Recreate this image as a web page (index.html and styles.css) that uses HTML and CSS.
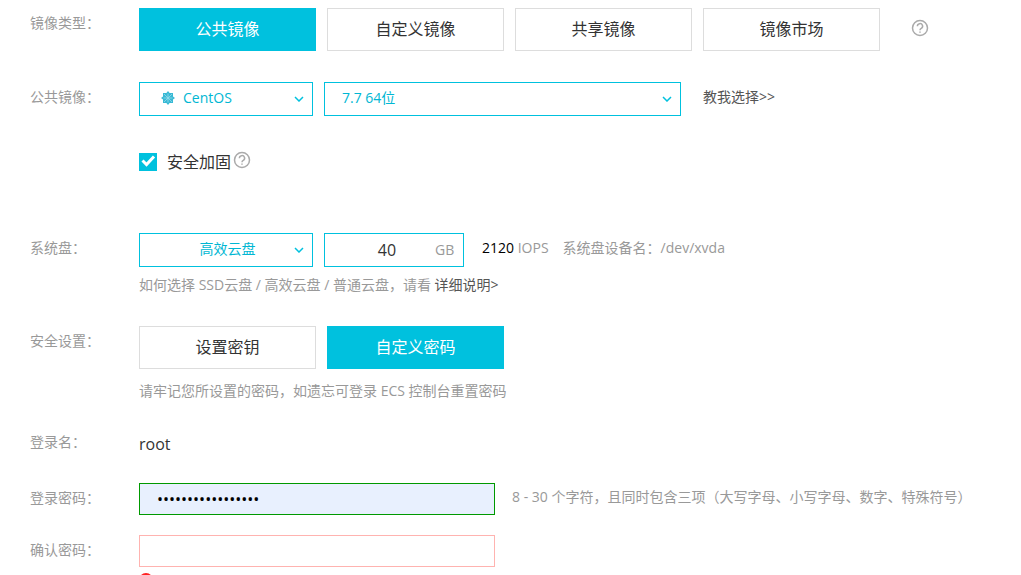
FILE: index.html
```html
<!DOCTYPE html>
<html lang="zh-CN">
<head>
  <meta charset="UTF-8" />
  <meta name="viewport" content="width=device-width, initial-scale=1.0"/>
  <title>云服务器配置</title>
  <link rel="stylesheet" href="styles.css">
</head>
<body>
  <form class="config">
    <div class="row row-type">
      <span class="label">镜像类型：</span>
      <div class="field">
        <div class="tabs">
          <button type="button" class="tab active">公共镜像</button>
          <button type="button" class="tab">自定义镜像</button>
          <button type="button" class="tab">共享镜像</button>
          <button type="button" class="tab">镜像市场</button>
        </div>
        <svg class="help help-far" viewBox="0 0 18 18"><circle cx="9" cy="9" r="7.5"/><path d="M6.4 7.2a2.6 2.5 0 1 1 3.9 2.1c-.9.5-1.3.9-1.3 1.9"/><path d="M9 12.5v1.3"/></svg>
      </div>
    </div>

    <div class="row row-image">
      <label class="label" for="imagen">公共镜像：</label>
      <div class="field">
        <div class="select-box narrow">
          <svg class="os-icon" viewBox="0 0 14 14"><path class="os-star" d="M7 0l1.6 2h3.4v3.4L14 7l-2 1.6v3.4H8.600L7 14l-1.600-2H2V8.600L0 7l2-1.600V2h3.400z"/><path class="os-lines" d="M7 2.500v9M2.500 7h9M3 3l8 8M11 3l-8 8"/><circle cx="7" cy="7" r="1.200" fill="#8edcec"/></svg>
          <select id="imagen" class="with-icon"><option>CentOS</option></select>
          <svg class="arrow" viewBox="0 0 10 6"><path d="M1 1l4 4 4-4"/></svg>
        </div>
        <div class="select-box wide">
          <select aria-label="版本"><option>7.7 64位</option></select>
          <svg class="arrow" viewBox="0 0 10 6"><path d="M1 1l4 4 4-4"/></svg>
        </div>
        <a class="link choose" href="#">教我选择&gt;&gt;</a>
      </div>
    </div>

    <div class="row row-check">
      <span class="label"></span>
      <div class="field">
        <input type="checkbox" id="refuerzo" class="check" checked />
        <label class="check-text" for="refuerzo">安全加固</label>
        <svg class="help" viewBox="0 0 18 18"><circle cx="9" cy="9" r="7.5"/><path d="M6.4 7.2a2.6 2.5 0 1 1 3.9 2.1c-.9.5-1.3.9-1.3 1.9"/><path d="M9 12.5v1.3"/></svg>
      </div>
    </div>

    <div class="row row-disk">
      <label class="label" for="disco">系统盘：</label>
      <div class="field">
        <div class="select-box narrow">
          <select id="disco" class="centered"><option>高效云盘</option></select>
          <svg class="arrow" viewBox="0 0 10 6"><path d="M1 1l4 4 4-4"/></svg>
        </div>
        <div class="size-box">
          <input type="text" id="tamano" value="40" aria-label="容量" />
          <label for="tamano">GB</label>
        </div>
        <span class="info"><span class="iops">2120</span> IOPS</span>
        <span class="info device">系统盘设备名：/dev/xvda</span>
      </div>
    </div>
    <p class="note note-disk">如何选择 SSD云盘 / 高效云盘 / 普通云盘，请看 <a class="link" href="#">详细说明&gt;</a></p>

    <div class="row row-security">
      <span class="label">安全设置：</span>
      <div class="field">
        <div class="tabs">
          <button type="button" class="tab">设置密钥</button>
          <button type="button" class="tab active">自定义密码</button>
        </div>
      </div>
    </div>
    <p class="note note-security">请牢记您所设置的密码，如遗忘可登录 ECS 控制台重置密码</p>

    <div class="row row-user">
      <span class="label">登录名：</span>
      <div class="field"><span class="user">root</span></div>
    </div>

    <div class="row row-pass">
      <label class="label" for="clave">登录密码：</label>
      <div class="field">
        <input type="password" id="clave" class="pass valid" value="Abcdefgh123456789" />
        <span class="info rule">8 - 30 个字符，且同时包含三项（大写字母、小写字母、数字、特殊符号）</span>
      </div>
    </div>

    <div class="row row-confirm">
      <label class="label" for="confirmar">确认密码：</label>
      <div class="field">
        <input type="password" id="confirmar" class="pass invalid" />
      </div>
    </div>
    <div class="error">
      <svg viewBox="0 0 14 14"><circle cx="7" cy="7" r="7" fill="#f22"/><path d="M7 3v5M7 10v1" stroke="#fff" stroke-width="2"/></svg>
    </div>
  </form>
</body>
</html>
```
FILE: styles.css
```css
* {
  box-sizing: border-box;
}

body {
  height: 100vh;
  margin: 0;
  overflow: hidden;
  background-color: #fff;
  color: #333;
  font-family: "Open Sans", "Noto Sans CJK SC", sans-serif;
  font-size: 14px;
  line-height: 20px;
}

button, input, select {
  font: inherit;
}

.config {
  padding: 8px 30px 0;
}

.row {
  display: grid;
  grid-template-columns: 109px 1fr;
}

.label {
  padding-top: 5px;
  color: #999;
  white-space: nowrap;
}

.field {
  display: flex;
  align-items: center;
  white-space: nowrap;
}

.tabs {
  display: flex;
  gap: 11px;
}

.tab {
  width: 177px;
  height: 43px;
  padding: 0 0 2px;
  border: 1px solid #ddd;
  background-color: #fff;
  color: #333;
  font-size: 16px;
  cursor: pointer;
}

.tab.active {
  border-color: #00c1de;
  background-color: #00c1de;
  color: #fff;
}

.help {
  width: 18px;
  height: 18px;
  margin: 0 0 4px 2px;
  fill: none;
  stroke: #aaa;
  stroke-width: 1.5;
}

.help-far {
  margin-left: 31px;
}

.row-image {
  margin-top: 31px;
}

.select-box {
  position: relative;
  margin-right: 11px;
}

.narrow {
  width: 174px;
}

.wide {
  width: 357px;
}

.select-box select {
  display: block;
  width: 100%;
  height: 34px;
  padding: 0 30px 2px 17px;
  border: 1px solid #00c1de;
  border-radius: 0;
  background-color: #fff;
  color: #00b7d3;
  appearance: none;
}

.select-box .with-icon {
  padding-left: 43px;
}

.select-box .centered {
  padding: 0 14px 2px 17px;
  text-align-last: center;
}

.arrow {
  position: absolute;
  top: 14px;
  right: 9px;
  width: 10px;
  height: 6px;
  fill: none;
  stroke: #00c1de;
  stroke-width: 1.5;
  pointer-events: none;
}

.os-icon {
  position: absolute;
  top: 9px;
  left: 22px;
  width: 14px;
  height: 14px;
  pointer-events: none;
}

.os-star {
  fill: #38b9d5;
}

.os-lines {
  fill: none;
  stroke: #a4e0ed;
  stroke-width: 0.7;
}

.link {
  color: #555;
  text-decoration: none;
}

.choose {
  margin-left: 11px;
  padding-bottom: 4px;
}

.row-check {
  margin-top: 34px;
}

.check {
  width: 18px;
  height: 18px;
  margin: 0 10px 0 0;
  background: #00c1de url("data:image/svg+xml,%3Csvg xmlns='http://www.w3.org/2000/svg' viewBox='0 0 18 18'%3E%3Cpath d='M3.5 7.5L7.5 11.5L15 3.5' fill='none' stroke='white' stroke-width='3'/%3E%3C/svg%3E");
  appearance: none;
}

.check-text {
  font-size: 16px;
  line-height: 24px;
}

.row-disk {
  margin-top: 59px;
}

.size-box {
  display: flex;
  align-items: center;
  width: 140px;
  height: 34px;
  margin-right: 18px;
  border: 1px solid #00c1de;
  color: #999;
}

.size-box input {
  width: 110px;
  padding: 0 0 0 14px;
  border: 0;
  background: none;
  color: #333;
  font-size: 16px;
  text-align: center;
}

.info {
  padding-bottom: 4px;
  color: #999;
}

.iops {
  color: #000;
}

.device {
  margin-left: 14px;
}

.note {
  margin: 8px 0 0 109px;
  color: #999;
}

.row-security {
  margin-top: 31px;
}

.note-security {
  margin-top: 12px;
}

.row-user {
  margin-top: 31px;
}

.row-user .label {
  padding-top: 0;
}

.user {
  padding-top: 2px;
  font-size: 16px;
}

.row-pass {
  margin-top: 29px;
}

.pass {
  width: 356px;
  height: 32px;
  padding: 0 17px;
  border: 1px solid #ddd;
  font-size: 16px;
}

.valid {
  border-color: #090;
  background-color: #e8f0fe;
  color: #000;
}

.invalid {
  border-color: #ffb3b0;
}

.rule {
  margin-left: 17px;
}

.row-confirm {
  margin-top: 20px;
}

.error {
  margin: 6px 0 0 109px;
}

.error svg {
  display: block;
  width: 14px;
  height: 14px;
}
```
